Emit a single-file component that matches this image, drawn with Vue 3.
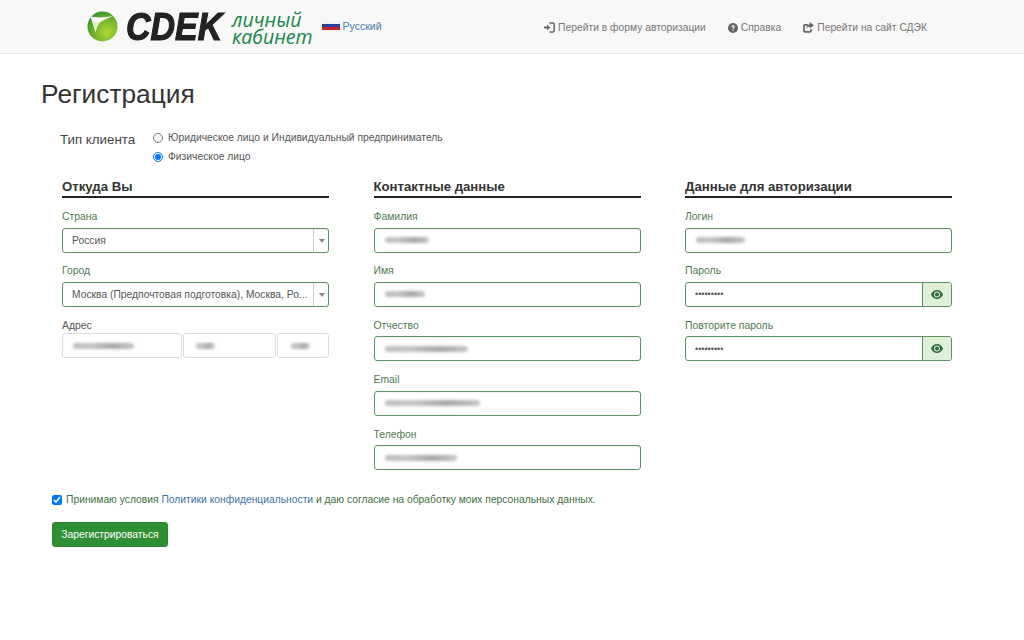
<template>
  <div class="page">
    <header class="navbar">
      <a class="brand">
        <svg class="brand-mark" width="31" height="31" viewBox="0 0 31 31">
          <defs>
            <radialGradient id="ball" cx="65%" cy="70%" r="80%">
              <stop offset="0" stop-color="#b5d63a" />
              <stop offset="0.55" stop-color="#72b52b" />
              <stop offset="1" stop-color="#2f8a28" />
            </radialGradient>
          </defs>
          <circle cx="15.5" cy="15.5" r="15" fill="url(#ball)" />
          <path d="M3.500 5.500 Q15 7.500 26 5 Q16 9 12.500 11.500 Q10 15 8.500 21 Q6 13 3.500 5.500 Z" fill="#fff" />
          <path d="M5.500 10 Q9 10.500 12.500 11.500 Q10 15 8.500 21 Q7 15 5.500 10 Z" fill="#e3eecb" />
        </svg>
        <span class="brand-word">CDEK</span>
        <span class="brand-sub">личный<br />кабинет</span>
      </a>
      <div class="lang">
        <span class="flag"><i class="w"></i><i class="b"></i><i class="r"></i></span>
        <a class="lang-link">Русский</a>
      </div>
      <nav class="nav-links">
        <a class="nav-link">
          <svg width="11" height="11" viewBox="0 0 11 11">
            <path d="M0 4.500h3V2.500L6.300 5.500 3 8.500v-2H0z" fill="#666" />
            <path d="M5.500 1h3.300c.9 0 1.400.5 1.400 1.400v6.200c0 .9-.5 1.400-1.400 1.400H5.500" fill="none" stroke="#666" stroke-width="1.500" />
          </svg>
          Перейти в форму авторизации
        </a>
        <a class="nav-link">
          <svg width="10" height="10" viewBox="0 0 10 10">
            <circle cx="5" cy="5" r="5" fill="#666" />
            <path d="M3.300 3.900c0-1.100.8-1.700 1.800-1.700s1.700.6 1.700 1.500c0 1.200-1.300 1.200-1.300 2.200H4.500c0-1.500 1.100-1.500 1.100-2.100 0-.3-.2-.5-.5-.5-.4 0-.6.3-.6.6z" fill="#f8f8f8" />
            <rect x="4.500" y="6.600" width="1.100" height="1.200" fill="#f8f8f8" />
          </svg>
          Справка
        </a>
        <a class="nav-link">
          <svg width="11" height="11" viewBox="0 0 11 11">
            <path d="M8 7v2c0 .5-.3.800-.8.800H1.800c-.5 0-.8-.3-.8-.8V3.600c0-.5.3-.8.8-.8h3" fill="none" stroke="#666" stroke-width="1.700" />
            <path d="M6.600 0 11 3.300 6.600 6.600V4.700C5 4.700 4 5.300 3.400 6.600c0-2.600 1.200-4.100 3.200-4.400z" fill="#666" />
          </svg>
          Перейти на сайт СДЭК
        </a>
      </nav>
    </header>

    <main class="content">
      <h1 class="title">Регистрация</h1>

      <div class="client-type">
        <span class="client-label">Тип клиента</span>
        <div class="radios">
          <label class="radio"><input type="radio" name="client" />Юридическое лицо и Индивидуальный предприниматель</label>
          <label class="radio"><input type="radio" name="client" checked />Физическое лицо</label>
        </div>
      </div>

      <div class="columns">
        <section>
          <h2 class="col-title">Откуда Вы</h2>
          <div class="field">
            <label>Страна</label>
            <div class="select"><span class="select-value">Россия</span><span class="select-arrow"></span></div>
          </div>
          <div class="field">
            <label>Город</label>
            <div class="select"><span class="select-value">Москва (Предпочтовая подготовка), Москва, Ро...</span><span class="select-arrow"></span></div>
          </div>
          <div class="field">
            <label class="addr-label">Адрес</label>
            <div class="address">
              <div class="addr-box street"><span class="smear" style="width: 61px"></span></div>
              <div class="addr-box house"><span class="smear" style="width: 19px"></span></div>
              <div class="addr-box flat"><span class="smear" style="width: 19px"></span></div>
            </div>
          </div>
        </section>

        <section>
          <h2 class="col-title">Контактные данные</h2>
          <div class="field" v-for="f in contacts" :key="f.label">
            <label>{{ f.label }}</label>
            <div class="box"><span class="smear" :style="{ width: f.width + 'px' }"></span></div>
          </div>
        </section>

        <section>
          <h2 class="col-title">Данные для авторизации</h2>
          <div class="field">
            <label>Логин</label>
            <div class="box"><span class="smear" style="width: 49px"></span></div>
          </div>
          <div class="field" v-for="p in passwords" :key="p">
            <label>{{ p }}</label>
            <div class="pass-group">
              <input class="pass-input" type="password" value="password1" readonly />
              <span class="eye-btn">
                <svg width="12" height="9" viewBox="0 0 12 9">
                  <path d="M6 0C3.400 0 1.200 1.700 0 4.500 1.200 7.300 3.400 9 6 9s4.800-1.700 6-4.500C10.800 1.700 8.600 0 6 0zm0 7.600c-1.900 0-3-1.300-3-3.100S4.100 1.400 6 1.400s3 1.300 3 3.100-1.100 3.100-3 3.100z" fill="#2f6b3a" />
                  <circle cx="6" cy="4.500" r="2" fill="#2f6b3a" />
                </svg>
              </span>
            </div>
          </div>
        </section>
      </div>

      <label class="agree">
        <input type="checkbox" checked />
        <span>Принимаю условия <a class="policy">Политики конфиденциальности</a> и даю согласие на обработку моих персональных данных.</span>
      </label>

      <button class="submit">Зарегистрироваться</button>
    </main>
  </div>
</template>

<script setup>
const contacts = [
  { label: 'Фамилия', width: 44 },
  { label: 'Имя', width: 40 },
  { label: 'Отчество', width: 83 },
  { label: 'Email', width: 95 },
  { label: 'Телефон', width: 72 }
]

const passwords = ['Пароль', 'Повторите пароль']
</script>

<style>
html, body {
  background: #fff;
}
</style>

<style scoped>
.page {
  width: 1024px;
  height: 640px;
  overflow: hidden;
  font-family: "Liberation Sans", Arial, sans-serif;
  font-size: 10.3px;
  color: #555;
}

.navbar {
  display: flex;
  align-items: center;
  height: 53px;
  padding-left: 87px;
  background: #f8f8f8;
  border-bottom: 1px solid #e7e7e7;
}

.brand {
  display: flex;
  align-items: center;
}

.brand-word {
  display: block;
  width: 106px;
  margin-left: 8px;
  font-size: 39px;
  line-height: 36px;
  font-weight: 700;
  font-style: italic;
  color: #222;
  -webkit-text-stroke: 1.2px #222;
  transform: scaleX(0.87);
  transform-origin: left center;
}

.brand-sub {
  margin-top: 3px;
  font-family: "Open Sans", sans-serif;
  font-size: 19.5px;
  line-height: 17px;
  font-style: italic;
  font-weight: 400;
  color: #16874b;
}

.lang {
  display: flex;
  align-items: center;
  margin: 0 0 2px 9px;
}

.flag {
  display: flex;
  flex-direction: column;
  width: 18px;
  height: 10px;
}

.flag i {
  flex: 1;
}

.flag .w { background: #f2f2f2; }
.flag .b { background: #2b3f9e; }
.flag .r { background: #c8202c; }

.lang-link {
  margin-left: 3px;
  font-size: 10.5px;
  color: #4a7bab;
}

.nav-links {
  display: flex;
  gap: 22px;
  margin: 2px 97px 0 auto;
}

.nav-link {
  display: flex;
  align-items: center;
  gap: 3px;
  font-size: 10.3px;
  color: #777;
}

.content {
  padding-left: 41px;
}

.title {
  margin: 22px 0 0;
  font-size: 26.3px;
  line-height: 36px;
  font-weight: 400;
  color: #333;
}

.client-type {
  display: flex;
  margin: 18px 0 0 19px;
}

.client-label {
  width: 93px;
  padding-top: 2px;
  font-size: 13.3px;
  line-height: 16px;
  color: #444;
}

.radios {
  display: flex;
  flex-direction: column;
  gap: 6px;
  padding-top: 1px;
}

.radio {
  display: flex;
  align-items: center;
  height: 13px;
  font-size: 10.3px;
  color: #555;
}

.radio input {
  width: 10px;
  height: 10px;
  margin: 0 5px 0 0;
}

.columns {
  display: grid;
  grid-template-columns: repeat(3, 267px);
  column-gap: 44.5px;
  margin: 16px 0 0 21px;
}

.col-title {
  margin: 0 0 12px;
  height: 17px;
  line-height: 15px;
  font-size: 13.2px;
  font-weight: 700;
  color: #333;
  border-bottom: 2px solid #222;
}

.field {
  margin-bottom: 11.9px;
}

.field label {
  display: block;
  height: 13px;
  margin-bottom: 4.5px;
  line-height: 13px;
  font-size: 10.4px;
  color: #4f7a50;
}

.field .addr-label {
  margin-bottom: 1.5px;
  color: #555;
}

.box,
.select,
.pass-group {
  display: flex;
  align-items: center;
  box-sizing: border-box;
  height: 25px;
  border: 1px solid #5f9160;
  border-radius: 3px;
  background: #fff;
  box-shadow: inset 0 1px 1px rgba(0, 0, 0, 0.05);
}

.box {
  padding-left: 10px;
}

.select-value {
  flex: 1;
  min-width: 0;
  padding-left: 9px;
  font-size: 10.3px;
  color: #555;
  white-space: nowrap;
}

.select-arrow {
  position: relative;
  flex: none;
  width: 14px;
  height: 100%;
  border-left: 1px solid #ccc;
}

.select-arrow::after {
  content: "";
  position: absolute;
  left: 5px;
  top: 10px;
  border-style: solid;
  border-width: 4px 3px 0;
  border-color: #888 transparent transparent;
}

.address {
  display: flex;
  gap: 1px;
}

.addr-box {
  display: flex;
  align-items: center;
  box-sizing: border-box;
  height: 25px;
  padding-left: 10px;
  border: 1px solid #ddd;
  border-radius: 3px;
}

.street { width: 120px; }
.house { width: 93px; padding-left: 12px; }
.flat { width: 52px; padding-left: 13px; }

.smear {
  display: block;
  height: 6px;
  background: linear-gradient(90deg, #bbb, #c4c4c4 30%, #a6a6a6 65%, #c6c6c6);
  filter: blur(1.8px);
  border-radius: 3px;
}

.pass-input {
  flex: 1;
  min-width: 0;
  height: 100%;
  box-sizing: border-box;
  padding: 0 0 0 9px;
  border: 0;
  outline: 0;
  background: transparent;
  font-family: "Liberation Sans", sans-serif;
  font-size: 9px;
  color: #555;
}

.eye-btn {
  display: flex;
  align-items: center;
  justify-content: center;
  flex: none;
  width: 28px;
  height: 100%;
  border-left: 1px solid #5f9160;
  border-radius: 0 2px 2px 0;
  background: #dff0d8;
}

.agree {
  display: flex;
  align-items: center;
  margin: 11px 0 0 11px;
  height: 14px;
  font-size: 10.3px;
  color: #3f6f40;
}

.agree input {
  width: 10px;
  height: 10px;
  margin: 0 4px 0 0;
}

.policy {
  color: #3a72a8;
}

.submit {
  display: block;
  width: 116px;
  height: 25px;
  margin: 15px 0 0 11px;
  padding: 0;
  border: 1px solid #2a8530;
  border-radius: 3px;
  background: #2f8f35;
  color: #fff;
  font-family: "Liberation Sans", sans-serif;
  font-size: 10.3px;
}
</style>
